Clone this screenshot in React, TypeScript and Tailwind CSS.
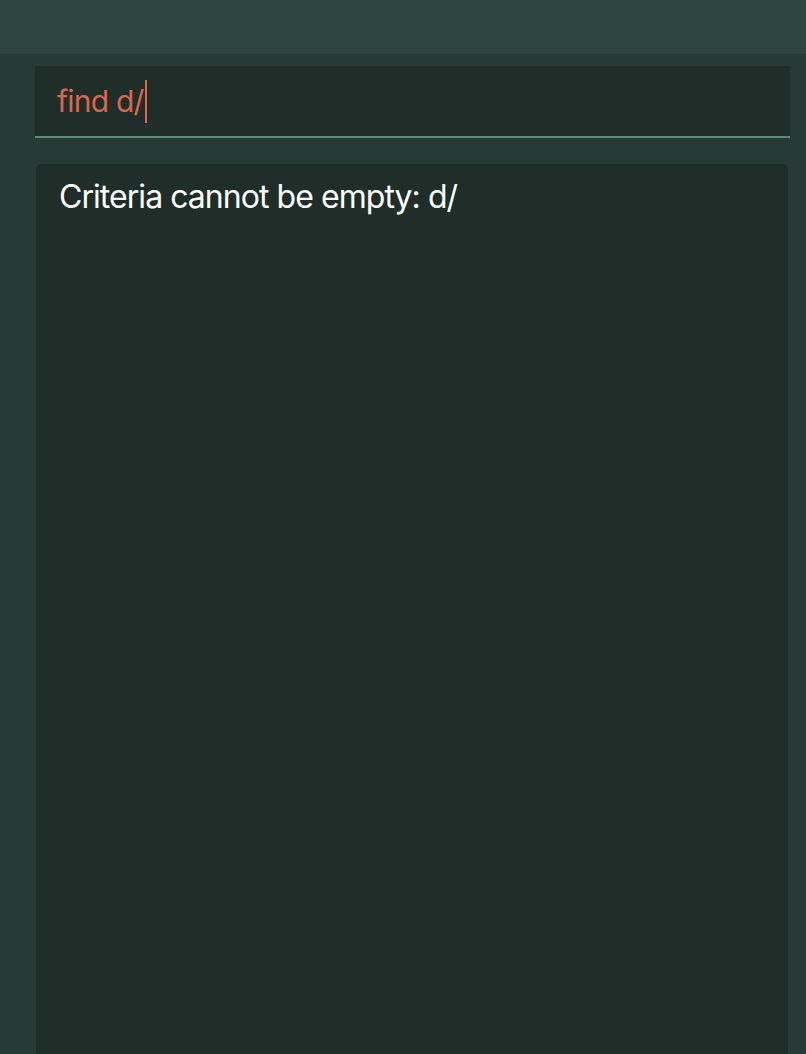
export default function App() {
  return (
    <div className="w-[806px] h-[1054px] overflow-hidden flex flex-col bg-[#283a35] font-['Inter',sans-serif]">
      {/* Top bar */}
      <div className="h-[54px] shrink-0 bg-[#2f4640]" />

      <div className="flex-1 flex flex-col pt-3 pl-[35px] pr-4">
        {/* Command input */}
        <div className="h-[72px] bg-[#1f2e29] border-b-2 border-[#5b8c6e] flex items-center pl-[22px]">
          <span className="text-[30px] leading-none text-[#d9674f] tracking-[-0.8px]">find d/</span>
          <span className="ml-[2px] w-[2px] h-[43px] bg-[#d9674f]" />
        </div>

        {/* Result display */}
        <div className="flex-1 mt-[26px] ml-[1px] mr-[2px] bg-[#1f2e29] rounded-t-[5px] px-[23px] pt-[13px]">
          <p className="text-[32px] leading-[40px] text-white tracking-[-0.95px]">Criteria cannot be empty: d/</p>
        </div>
      </div>
    </div>
  );
}
